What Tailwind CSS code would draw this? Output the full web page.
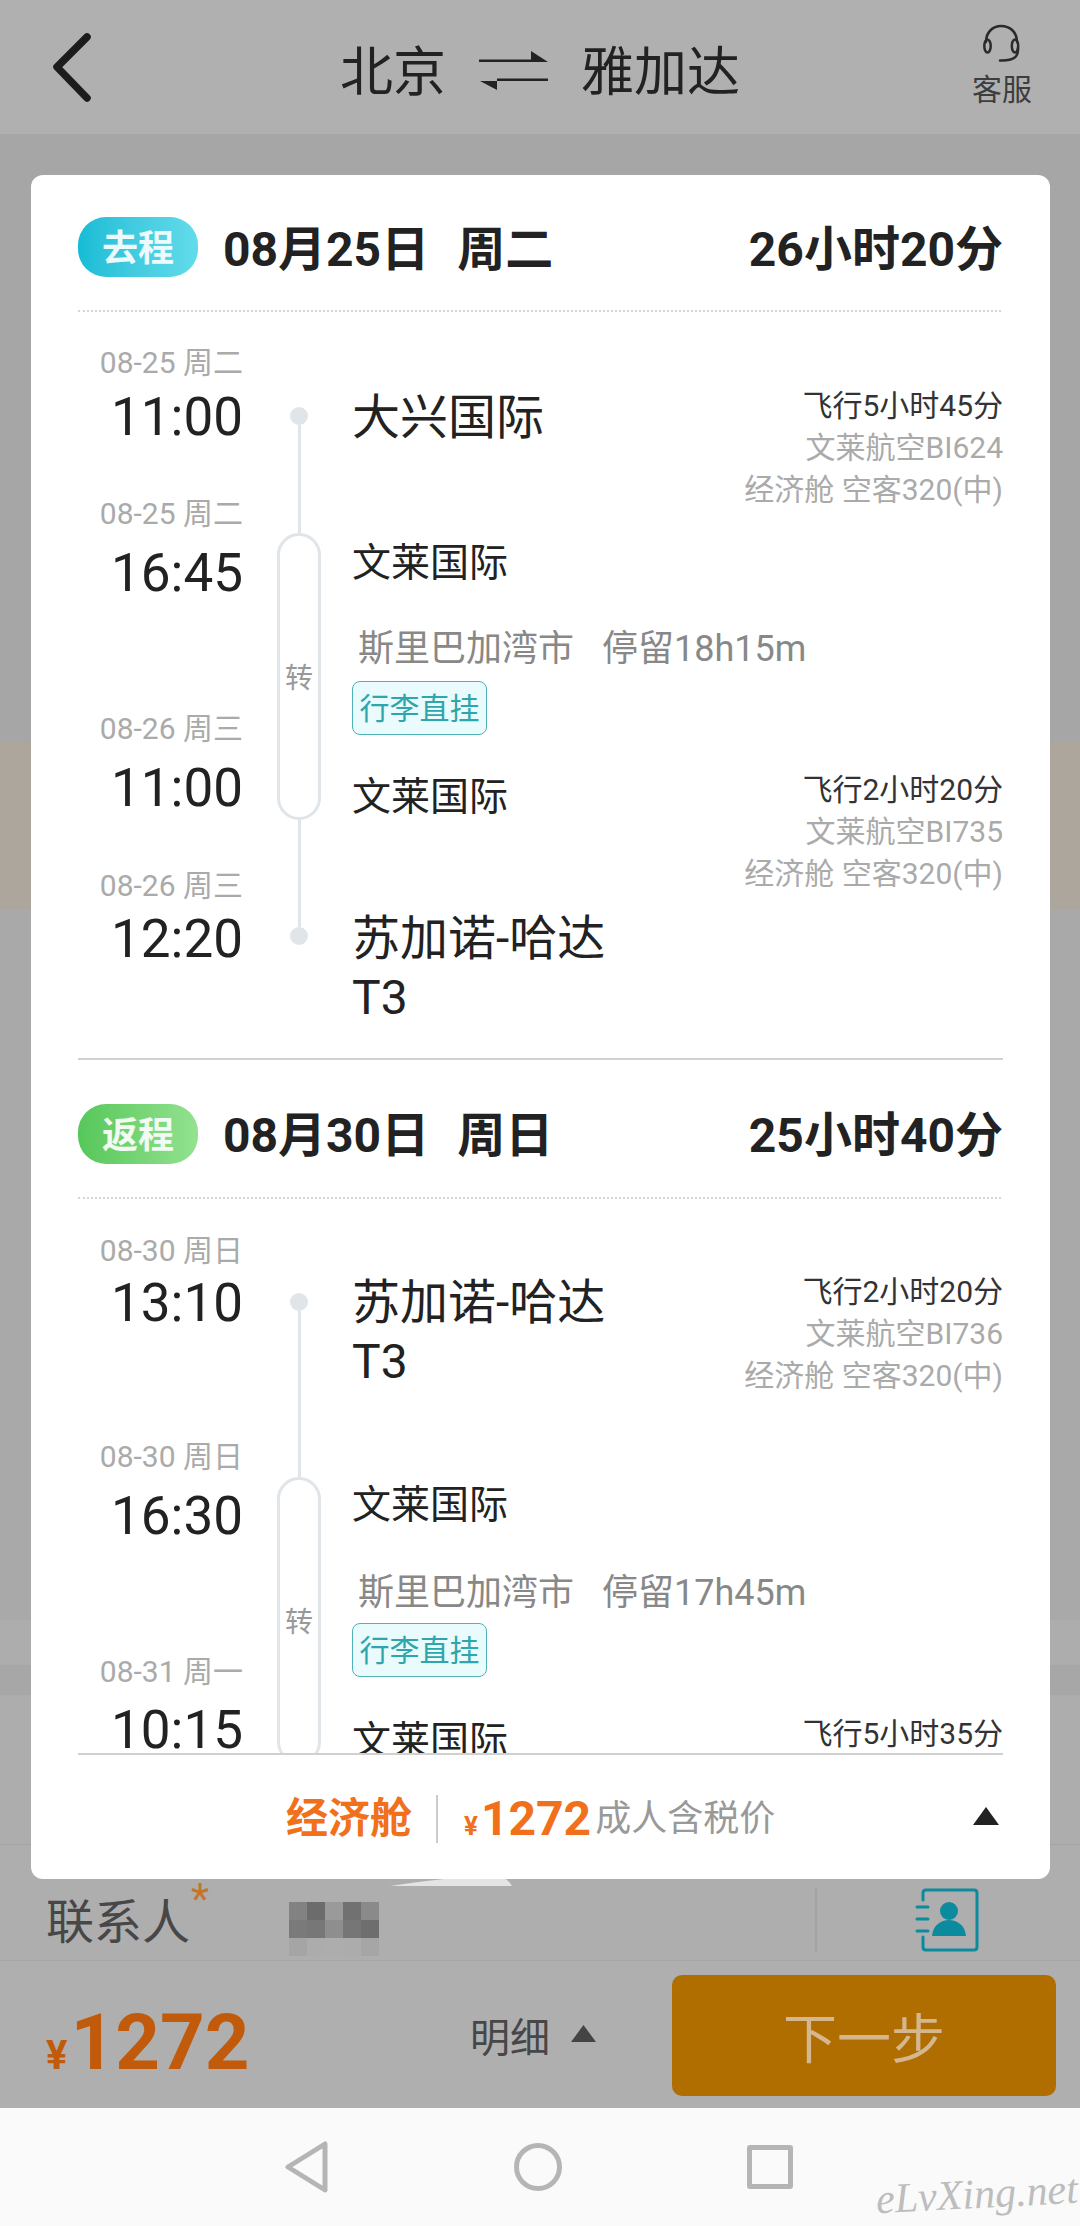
<!DOCTYPE html>
<html lang="zh">

<head>
    <meta charset="UTF-8">
    <meta name="viewport" content="width=device-width, initial-scale=1.0">
    <title>航班详情</title>
    <script src="https://cdn.jsdelivr.net/npm/@tailwindcss/browser@4"></script>
</head>

<body>
    <div class="relative w-[1080px] h-[2226px] flex flex-col overflow-hidden bg-[#aaaaaa] font-['Roboto','Noto_Sans_CJK_SC',sans-serif]">

        <!-- Header -->
        <div class="relative h-[134px] shrink-0 flex items-center justify-center pt-[12px] bg-[#b0b0b0] text-[#222222]">
            <svg class="absolute left-[50px] top-[32px] w-[44px] h-[72px]" viewBox="0 0 44 72" fill="none" stroke="#1c1c1c" stroke-width="7.5" stroke-linecap="round" stroke-linejoin="round">
                <path d="M37 5 L7 35 L37 66" />
            </svg>
            <div class="flex items-center">
                <span class="text-[53px] leading-none">北京</span>
                <svg class="w-[70px] h-[40px] ml-[33px] mr-[32px] mt-[-4px]" viewBox="0 0 70 40" fill="#222222">
                    <path d="M0 8.5 H52 V0 L69 11 H0 Z" />
                    <path d="M69 27.5 H18 V39 L1 30 H69 Z" />
                </svg>
                <span class="text-[53px] leading-none">雅加达</span>
            </div>
            <div class="absolute right-[48px] top-[24px] flex flex-col items-center w-[60px]">
                <svg class="w-[40px] h-[40px]" viewBox="0 0 40 40" fill="none" stroke="#2a2a2a" stroke-width="2.5" stroke-linecap="round">
                    <path d="M4 18 C4 8 11 2 19 2 C28 2 35 8 35 18" />
                    <ellipse cx="5.5" cy="22" rx="3.2" ry="6.5" />
                    <ellipse cx="33" cy="22" rx="3.2" ry="6.5" />
                    <path d="M36 24 C36.5 33 32 37 18 36.5" />
                </svg>
                <span class="text-[30px] leading-[36px] mt-[8px] text-[#3d3d3d]">客服</span>
            </div>
        </div>

        <!-- Page behind the sheet -->
        <div class="h-[608px] shrink-0 bg-[#a6a6a6]"></div>
        <div class="h-[168px] shrink-0 bg-[#aca69c]"></div>
        <div class="h-[710px] shrink-0 bg-[#a9a9a9]"></div>
        <div class="h-[45px] shrink-0 bg-[#adadad]"></div>
        <div class="h-[30px] shrink-0 bg-[#a7a7a7]"></div>
        <div class="h-[150px] shrink-0 bg-[#adadad] border-b border-[#a4a4a4]"></div>

        <!-- Contact row -->
        <div class="relative h-[116px] shrink-0 flex items-end bg-[#aeaeae] border-b border-[#a6a6a6]">
            <div class="flex items-center h-[85px] w-full">
                <span class="ml-[46px] mt-[10px] text-[48px] leading-none text-[#474747]">联系人</span>
                <span class="text-[42px] leading-none text-[#c5752a] ml-[1px] mb-[48px] h-[32px]">*</span>
                <div class="ml-[80px] mt-[23px] grid grid-cols-5 w-[90px] h-[54px] auto-rows-[18px]">
                    <div class="bg-[#828282]"></div><div class="bg-[#6c6c6c]"></div><div class="bg-[#9a9a9a]"></div><div class="bg-[#717171]"></div><div class="bg-[#8a8a8a]"></div>
                    <div class="bg-[#7a7a7a]"></div><div class="bg-[#777777]"></div><div class="bg-[#8e8e8e]"></div><div class="bg-[#767676]"></div><div class="bg-[#6e6e6e]"></div>
                    <div class="bg-[#a5a5a5]"></div><div class="bg-[#acacac]"></div><div class="bg-[#adadad]"></div><div class="bg-[#acacac]"></div><div class="bg-[#a6a6a6]"></div>
                </div>
                <div class="ml-[436px] mt-[4px] w-[2px] h-[64px] bg-[#a4a4a4]"></div>
                <svg class="ml-[98px] mt-[4px] w-[64px] h-[66px]" viewBox="0 0 64 66" fill="none" stroke="#0c8a9e" stroke-width="3" stroke-linecap="round">
                    <path d="M8 13 V6 Q8 3 11 3 H59 Q62 3 62 6 V60 Q62 63 59 63 H11 Q8 63 8 60 V50" />
                    <path d="M2 20 H13 M2 32 H13 M2 44 H13" />
                    <circle cx="34" cy="24" r="9" fill="#0c8a9e" stroke="none" />
                    <path d="M17 49 C18 38 26 33 34 33 C42 33 50 38 51 49 Z" fill="#0c8a9e" stroke="none" />
                </svg>
            </div>
        </div>

        <!-- Price bar -->
        <div class="h-[147px] shrink-0 flex items-center pr-[24px] bg-[#afafaf]">
            <div class="w-[470px] pl-[46px] mt-[16px] flex items-baseline text-[#c25a0c] font-bold">
                <span class="text-[40px] leading-none">¥</span>
                <span class="text-[78px] leading-none ml-[3px]">1272</span>
            </div>
            <span class="mt-[8px] text-[40px] leading-none text-[#474747]">明细</span>
            <svg class="ml-[21px] mb-[2px] w-[25px] h-[17px]" viewBox="0 0 25 17" fill="#444444"><path d="M12.5 0 L25 17 H0 Z" /></svg>
            <div class="ml-auto mt-[2px] w-[384px] h-[121px] flex items-center justify-center pt-[9px] rounded-[10px] bg-[#b06d00] text-[54px] text-[#d4b78f]">下一步</div>
        </div>

        <!-- Android nav bar -->
        <div class="flex-1 flex items-center justify-center gap-[185px] pr-[2px] bg-[#fafafa]">
            <svg class="w-[44px] h-[52px]" viewBox="0 0 44 52" fill="none" stroke="#b5b5b5" stroke-width="5" stroke-linejoin="round"><path d="M40 3 V49 L3 26 Z" /></svg>
            <div class="w-[48px] h-[48px] rounded-full border-[5px] border-[#b5b5b5]"></div>
            <div class="w-[46px] h-[44px] rounded-[3px] border-[5px] border-[#b5b5b5]"></div>
        </div>

        <!-- Watermark -->
        <span class="absolute left-[876px] top-[2173px] text-[42px] leading-none italic text-[#bdbdbd] -rotate-3 font-['Liberation_Serif',serif]">eLvXing.net</span>

        <!-- Smudge under the sheet -->
        <svg class="absolute left-[390px] top-[1872px] w-[124px] h-[16px]" viewBox="0 0 124 16" fill="#e4e4e4"><path d="M0 14 Q50 6 105 3 Q116 4 122 14 Z" /></svg>

        <!-- Flight detail sheet -->
        <div class="absolute left-[31px] top-[175px] w-[1019px] h-[1704px] flex flex-col rounded-[12px] bg-white text-[#222222]">
            <div class="h-[1578px] shrink-0 overflow-hidden px-[47px]">

                <!-- Outbound -->
                <div class="flex items-center pt-[42px] h-[102px]">
                    <div class="w-[120px] h-[60px] flex items-center justify-center pt-[3px] rounded-[28px] bg-linear-to-r from-[#14bcd6] to-[#62dcea] text-[36px] font-bold text-white/90">去程</div>
                    <div class="ml-[25px] pt-[5px] flex gap-[28px] text-[48px] font-bold leading-none">
                        <span>08月25日</span><span>周二</span>
                    </div>
                    <span class="ml-auto pt-[5px] text-[48px] font-bold leading-none">26小时20分</span>
                </div>
                <div class="mt-[33px] mr-[2px] border-t-2 border-dotted border-[#d5d5d5]"></div>

                <div class="flex h-[746px]">
                    <div class="w-[165px] shrink-0 pt-[33px] flex flex-col items-end">
                        <span class="h-[36px] text-[30px] leading-[36px] text-[#aaaaaa]">08-25 周二</span>
                        <span class="mt-[6px] h-[60px] text-[53px] leading-[60px]">11:00</span>
                        <span class="mt-[49px] h-[36px] text-[30px] leading-[36px] text-[#aaaaaa]">08-25 周二</span>
                        <span class="mt-[11px] h-[60px] text-[53px] leading-[60px]">16:45</span>
                        <span class="mt-[108px] h-[36px] text-[30px] leading-[36px] text-[#aaaaaa]">08-26 周三</span>
                        <span class="mt-[11px] h-[60px] text-[53px] leading-[60px]">11:00</span>
                        <span class="mt-[50px] h-[36px] text-[30px] leading-[36px] text-[#aaaaaa]">08-26 周三</span>
                        <span class="mt-[5px] h-[60px] text-[53px] leading-[60px]">12:20</span>
                    </div>
                    <div class="ml-[34px] w-[44px] shrink-0 pt-[95px] flex flex-col items-center">
                        <div class="w-[18px] h-[18px] shrink-0 rounded-full bg-[#dfe5e8]"></div>
                        <div class="w-[3px] h-[108px] shrink-0 bg-[#dfe5e8]"></div>
                        <div class="w-[44px] h-[287px] shrink-0 flex items-center justify-center pt-[4px] rounded-full border-[3px] border-[#dfe5e8] text-[28px] text-[#999999]">转</div>
                        <div class="w-[3px] h-[107px] shrink-0 bg-[#dfe5e8]"></div>
                        <div class="w-[18px] h-[18px] shrink-0 rounded-full bg-[#dfe5e8]"></div>
                    </div>
                    <div class="ml-[31px] flex-1 pt-[73px]">
                        <div class="flex justify-between items-start h-[148px]">
                            <span class="text-[48px] leading-[66px]">大兴国际</span>
                            <div class="flex flex-col items-end text-[30px] leading-[42px] text-[#aaaaaa]">
                                <span class="text-[#333333]">飞行5小时45分</span>
                                <span>文莱航空BI624</span>
                                <span>经济舱 空客320(中)</span>
                            </div>
                        </div>
                        <div class="h-[60px] text-[39px] leading-[60px]">文莱国际</div>
                        <div class="mt-[34px] ml-[6px] h-[44px] flex gap-[28px] text-[36px] leading-[44px] text-[#888888]">
                            <span>斯里巴加湾市</span><span>停留18h15m</span>
                        </div>
                        <div class="mt-[10px] w-[135px] h-[54px] flex items-center justify-center rounded-[8px] border border-[#4fb3b8] bg-[#e9fbfc] text-[30px] text-[#2ea6ab]">行李直挂</div>
                        <div class="mt-[34px] flex justify-between items-start h-[141px]">
                            <span class="text-[39px] leading-[56px]">文莱国际</span>
                            <div class="flex flex-col items-end text-[30px] leading-[42px] text-[#aaaaaa]">
                                <span class="text-[#333333]">飞行2小时20分</span>
                                <span>文莱航空BI735</span>
                                <span>经济舱 空客320(中)</span>
                            </div>
                        </div>
                        <div class="text-[48px] leading-[58px]">苏加诺-哈达</div>
                        <div class="mt-[1px] text-[48px] leading-[58px]">T3</div>
                    </div>
                </div>
                <div class="border-t-2 border-[#d0d0d0]"></div>

                <!-- Return -->
                <div class="flex items-center pt-[44px] h-[104px]">
                    <div class="w-[120px] h-[60px] flex items-center justify-center pt-[3px] rounded-[28px] bg-linear-to-r from-[#55c75a] to-[#93e28f] text-[36px] font-bold text-white/90">返程</div>
                    <div class="ml-[25px] pt-[3px] flex gap-[28px] text-[48px] font-bold leading-none">
                        <span>08月30日</span><span>周日</span>
                    </div>
                    <span class="ml-auto pt-[3px] text-[48px] font-bold leading-none">25小时40分</span>
                </div>
                <div class="mt-[33px] mr-[2px] border-t-2 border-dotted border-[#d5d5d5]"></div>

                <div class="flex h-[600px]">
                    <div class="w-[165px] shrink-0 pt-[34px] flex flex-col items-end">
                        <span class="h-[36px] text-[30px] leading-[36px] text-[#aaaaaa]">08-30 周日</span>
                        <span class="mt-[4px] h-[60px] text-[53px] leading-[60px]">13:10</span>
                        <span class="mt-[106px] h-[36px] text-[30px] leading-[36px] text-[#aaaaaa]">08-30 周日</span>
                        <span class="mt-[11px] h-[60px] text-[53px] leading-[60px]">16:30</span>
                        <span class="mt-[108px] h-[36px] text-[30px] leading-[36px] text-[#aaaaaa]">08-31 周一</span>
                        <span class="mt-[10px] h-[60px] text-[53px] leading-[60px]">10:15</span>
                    </div>
                    <div class="ml-[34px] w-[44px] shrink-0 pt-[94px] flex flex-col items-center">
                        <div class="w-[18px] h-[18px] shrink-0 rounded-full bg-[#dfe5e8]"></div>
                        <div class="w-[3px] h-[166px] shrink-0 bg-[#dfe5e8]"></div>
                        <div class="w-[44px] h-[287px] shrink-0 flex items-center justify-center pt-[4px] rounded-full border-[3px] border-[#dfe5e8] text-[28px] text-[#999999]">转</div>
                    </div>
                    <div class="ml-[31px] flex-1 pt-[72px]">
                        <div class="flex justify-between items-start h-[204px]">
                            <div class="pt-[3px] flex flex-col">
                                <span class="text-[48px] leading-[58px]">苏加诺-哈达</span>
                                <span class="mt-[1px] text-[48px] leading-[58px]">T3</span>
                            </div>
                            <div class="flex flex-col items-end text-[30px] leading-[42px] text-[#aaaaaa]">
                                <span class="text-[#333333]">飞行2小时20分</span>
                                <span>文莱航空BI736</span>
                                <span>经济舱 空客320(中)</span>
                            </div>
                        </div>
                        <div class="h-[60px] text-[39px] leading-[60px]">文莱国际</div>
                        <div class="mt-[36px] ml-[6px] h-[44px] flex gap-[28px] text-[36px] leading-[44px] text-[#888888]">
                            <span>斯里巴加湾市</span><span>停留17h45m</span>
                        </div>
                        <div class="mt-[8px] w-[135px] h-[54px] flex items-center justify-center rounded-[8px] border border-[#4fb3b8] bg-[#e9fbfc] text-[30px] text-[#2ea6ab]">行李直挂</div>
                        <div class="mt-[36px] flex justify-between items-start">
                            <span class="text-[39px] leading-[56px]">文莱国际</span>
                            <span class="text-[30px] leading-[42px] text-[#333333]">飞行5小时35分</span>
                        </div>
                    </div>
                </div>
            </div>

            <!-- Sheet footer -->
            <div class="mx-[47px] flex-1 flex items-center pt-[3px] border-t-2 border-[#d0d0d0]">
                <span class="ml-[208px] text-[42px] leading-none font-bold text-[#f0701c]">经济舱</span>
                <div class="ml-[24px] w-[2px] h-[48px] bg-[#cccccc]"></div>
                <div class="ml-[26px] flex items-baseline text-[#f0701c] font-bold">
                    <span class="text-[26px] leading-none">¥</span>
                    <span class="ml-[3px] text-[48px] leading-none">1272</span>
                </div>
                <span class="ml-[4px] text-[36px] leading-none text-[#999999]">成人含税价</span>
                <svg class="ml-auto mr-[4px] mb-[6px] w-[26px] h-[18px]" viewBox="0 0 26 18" fill="#222222"><path d="M13 0 L26 18 H0 Z" /></svg>
            </div>
        </div>
    </div>
</body>

</html>
